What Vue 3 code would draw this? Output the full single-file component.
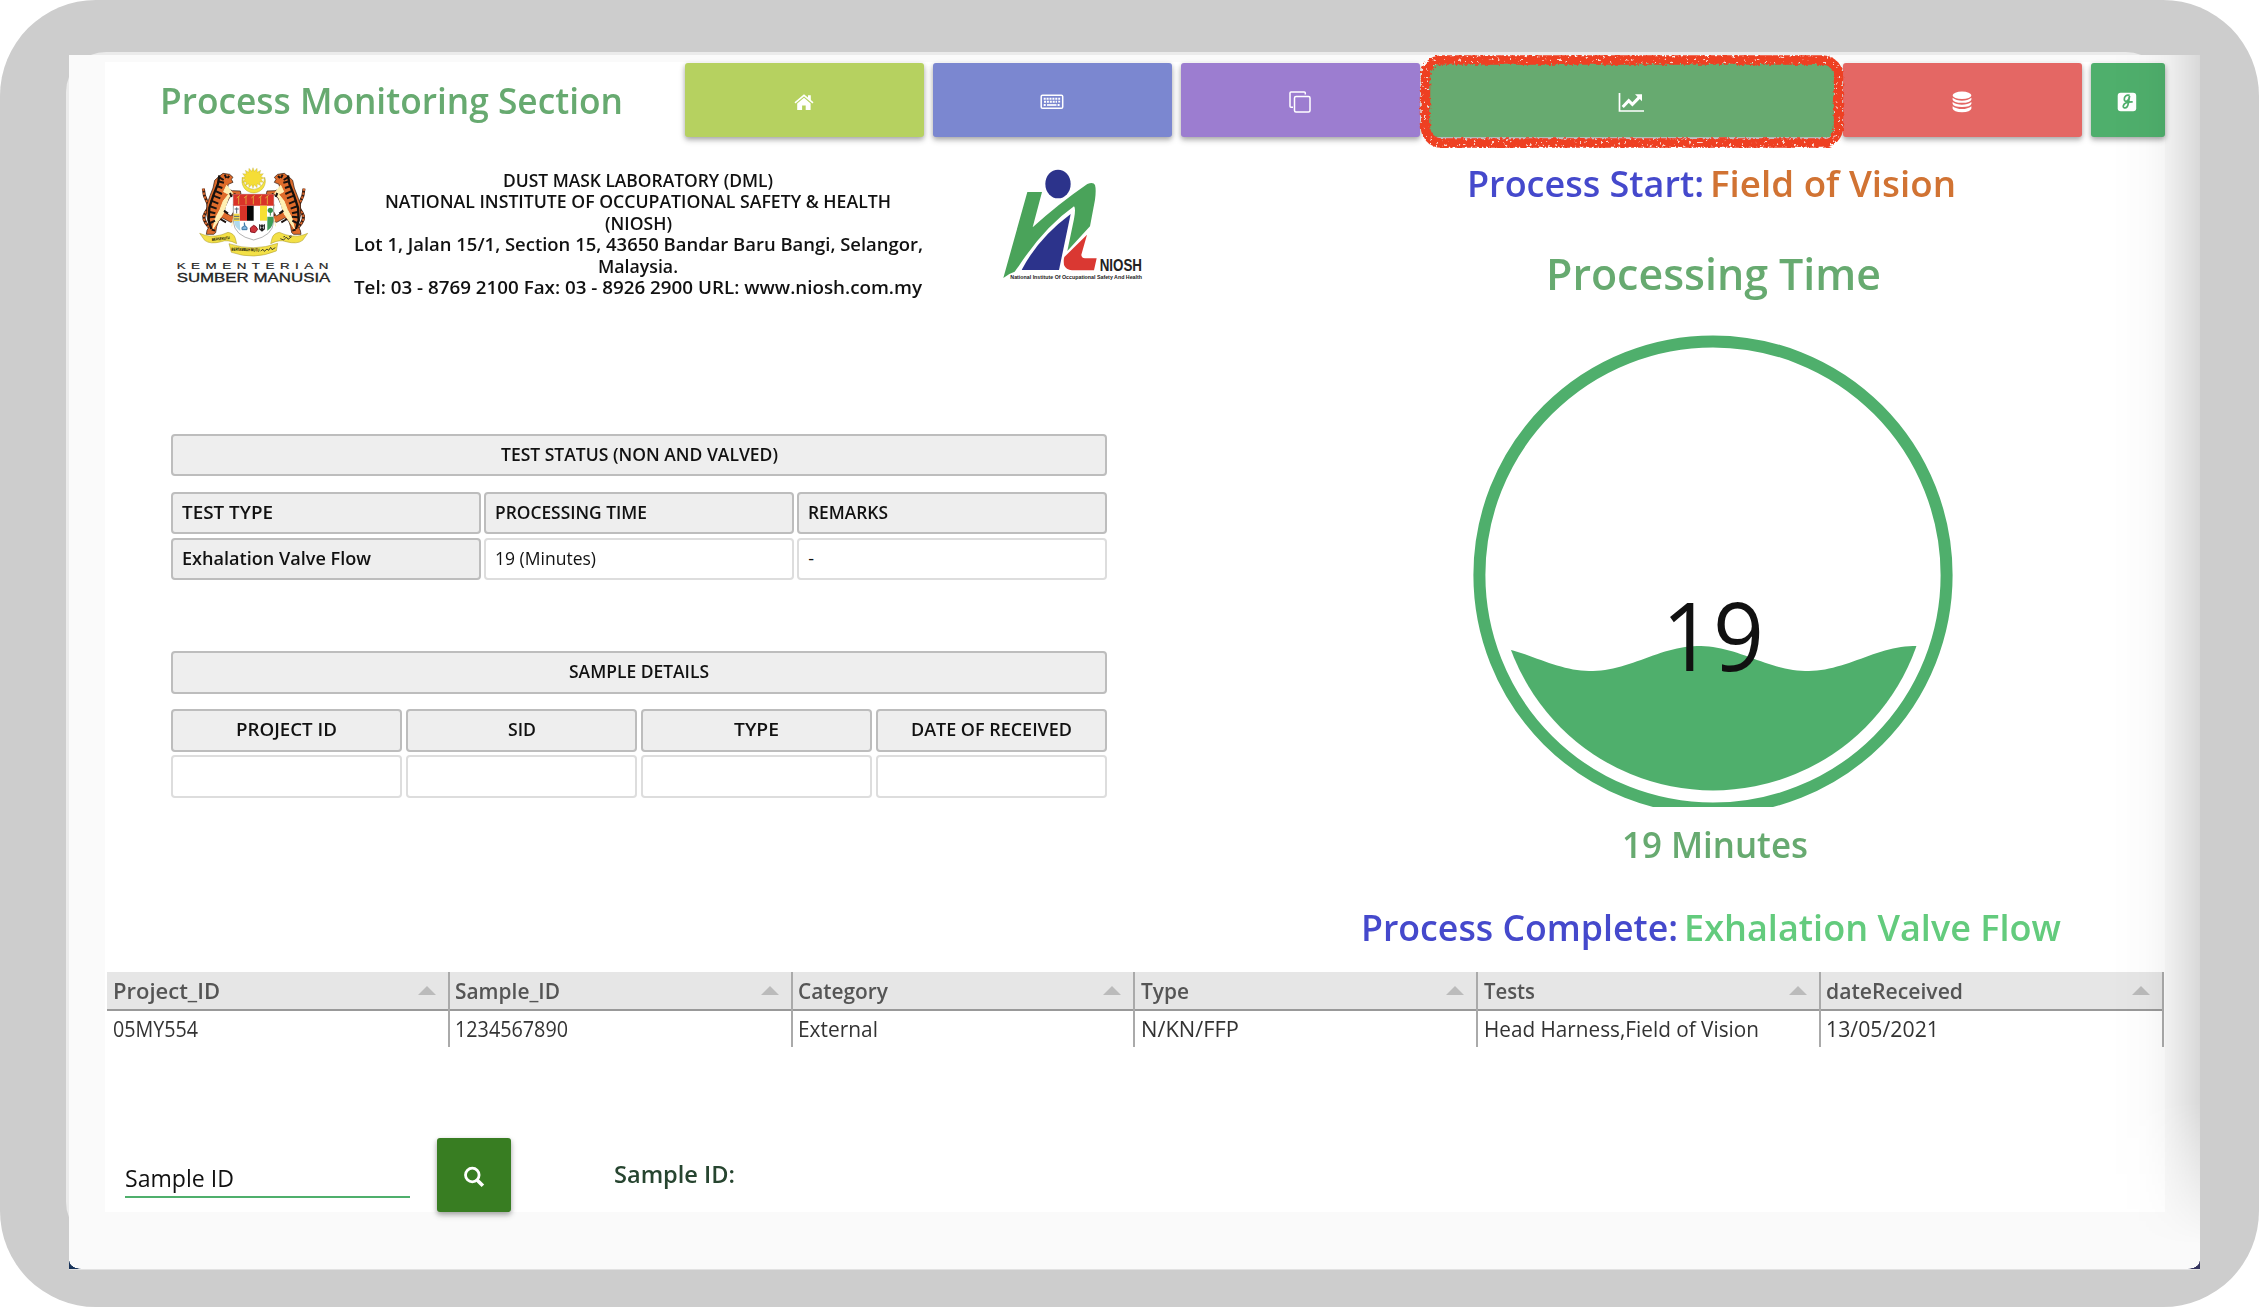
<script setup>
const stage = [
  { text: 'DUST MASK LABORATORY (DML)', w: 270 },
  { text: 'NATIONAL INSTITUTE OF OCCUPATIONAL SAFETY & HEALTH', w: 506 },
  { text: '(NIOSH)', w: 67 },
  { text: 'Lot 1, Jalan 15/1, Section 15, 43650 Bandar Baru Bangi, Selangor,', w: 569 },
  { text: 'Malaysia.', w: 80 },
  { text: 'Tel: 03 - 8769 2100 Fax: 03 - 8926 2900 URL: www.niosh.com.my', w: 568 },
]
const statusHead = [['TEST TYPE', 91], ['PROCESSING TIME', 152], ['REMARKS', 80]]
const sampleHead = [['PROJECT ID', 101], ['SID', 28], ['TYPE', 45], ['DATE OF RECEIVED', 161]]
const columns = [
  { name: 'Project_ID', nw: 107, value: '05MY554', vw: 85 },
  { name: 'Sample_ID', nw: 105, value: '1234567890', vw: 113 },
  { name: 'Category', nw: 90, value: 'External', vw: 80 },
  { name: 'Type', nw: 48, value: 'N/KN/FFP', vw: 98 },
  { name: 'Tests', nw: 51, value: 'Head Harness,Field of Vision', vw: 275 },
  { name: 'dateReceived', nw: 137, value: '13/05/2021', vw: 113 },
]

// Sets a label to a fixed width by condensing or widening its glyphs.
const vFit = {
  mounted(el, { value }) {
    const natural = el.getBoundingClientRect().width
    el.style.transform = `scaleX(${value / natural})`
    el.style.marginRight = `${value - natural}px`
  },
}

// Liquid gauge: sine surface clipped by the inner disc.
const surface = Array.from({ length: 111 }, (_, i) => {
  const x = 30 + i * 4
  const y = 338.5 - 12.5 * Math.cos(((x - 236) / 216.5) * 2 * Math.PI)
  return `${x} ${y.toFixed(2)}`
}).join('L')
const liquid = `M${surface}L470 480L30 480Z`
</script>

<template>
  <div class="device">
    <div class="bezel"></div>
    <div class="screen">
      <main class="panel">
        <header class="topbar">
          <h1><span v-fit="463" class="fit">Process Monitoring Section</span></h1>
          <nav>
            <button class="tile lime">
              <svg width="20" height="17" viewBox="0 0 20 17" fill="#fff"><path d="M10 3.7 3.2 9.5V16h4.9v-4.6h3.6V16h4.9V9.500z"/><path d="M1 8.900 10 1.400l9 7.500" fill="none" stroke="#fff" stroke-width="1.600"/><path d="M14 1.300h2.800v5.300L14 4.300z"/></svg>
            </button>
            <button class="tile blue">
              <svg width="24" height="16" viewBox="0 0 24 16"><rect x="1.200" y="1.200" width="21.500" height="13" rx="1.300" fill="none" stroke="#fff" stroke-width="1.500"/><path d="M3.700 4.700h14M4 7.700h13M3.700 11h2M17.600 11h2.600M19.200 3.800v4.700" stroke="#fff" stroke-width="1.900" stroke-dasharray="2 .9"/><path d="M7 11h9.500" stroke="#fff" stroke-width="1.700"/></svg>
            </button>
            <button class="tile violet">
              <svg width="24" height="24" viewBox="0 0 24 24" fill="none" stroke="#fff" stroke-width="1.500"><rect x="6.500" y="6.500" width="15.500" height="15.500" rx="1.500"/><path d="M17.300 4.500V3q0-1-1-1H3Q2 2 2 3v13.200q0 1 1 1h2"/></svg>
            </button>
            <button class="tile green active">
              <svg width="26" height="21" viewBox="0 0 26 21" fill="none" stroke="#fff"><path d="M1.500 1v18H26" stroke-width="1.700"/><path d="m4.700 15 6-6.300 3.700 3.700 7.300-7.500" stroke-width="3"/><path d="M17 2.300h7v7z" fill="#fff" stroke="none"/></svg>
              <svg class="marker" width="434" height="102" viewBox="0 0 434 102">
                <defs>
                  <filter id="crayon" x="-2%" y="-6%" width="104%" height="112%">
                    <feTurbulence type="fractalNoise" baseFrequency="0.3" numOctaves="2" seed="8" result="n"/>
                    <feDisplacementMap in="SourceGraphic" in2="n" scale="5" result="d"/>
                    <feTurbulence type="fractalNoise" baseFrequency="0.34" numOctaves="2" seed="3"/>
                    <feColorMatrix values="0 0 0 0 0  0 0 0 0 0  0 0 0 0 0  14 0 0 0 -9.300" result="holes"/>
                    <feComposite in="d" in2="holes" operator="out"/>
                  </filter>
                </defs>
                <rect x="10" y="10" width="413" height="83" rx="16" fill="none" stroke="#f8d8d2" stroke-width="6.500"/>
                <rect x="10.500" y="10" width="413" height="83" rx="16" fill="none" stroke="#ee3f24" stroke-width="9.500" filter="url(#crayon)"/>
              </svg>
            </button>
            <button class="tile red">
              <svg width="20" height="22" viewBox="0 0 20 22" fill="#fff"><ellipse cx="10" cy="4.300" rx="9.400" ry="3.700"/><path d="M.6 6.800q3.700 3 9.400 3t9.400-3v1.600q-1 3.400-9.400 3.400T.6 8.400zM.6 11q3.700 2.800 9.400 2.800T19.400 11v1.700q-1 3.300-9.400 3.300T.6 12.700zM.6 15.300q3.700 2.800 9.400 2.800t9.400-2.800v2.300q-1 3.700-9.400 3.700T.6 17.600z"/></svg>
            </button>
            <button class="tile emerald">
              <svg width="20" height="20" viewBox="0 0 20 20"><rect x=".7" y=".7" width="18.500" height="18.500" rx="3" fill="#fff"/><path d="M12.600 3.400c-3-1.200-5.500 1.200-5.300 4 .2 2.700 3.500 2.400 4.500-.6l.8-3-1.200 7.300c-.6 3.300-2.200 5.100-3.900 4.800-2.200-.5-1.300-3.700 1.200-4.900 2.200-1 4.100-1 7-1.100" fill="none" stroke="#4faf6c" stroke-width="1.700"/></svg>
            </button>
          </nav>
        </header>

        <section class="body">
          <div class="left">
            <div class="letterhead">
              <svg class="crest" width="190" height="145" viewBox="0 0 570 435">
                <g id="tiger">
                  <path d="M148 232q-25-25-12-44 15-18 4-35-9-16-10-37" fill="none" stroke="#3a1d10" stroke-width="9"/>
                  <path d="M148 232q-25-25-12-44 15-18 4-35-9-16-10-37" fill="none" stroke="#d9682f" stroke-width="6" stroke-dasharray="7 5"/>
                  <path d="m176 80 13-10 20 3 10 9-5 6 5 9-14 6-3 14 15 5 24 1 2 9-9 5-21-2-8 15-9 20-3 16 20 12 11-17-4-17 9-8 12 9-2 24-11 23-16 5-24-13-12 9-6 17-3 18-6 5h-22l2-12 7-12-8-35 1-32 9-25 9-23 5-23z" fill="#de6b2b" stroke="#24150f" stroke-width="2"/>
                  <path d="m200 106-9 19 15 8-16 20-10 26-14 26-7 31 15-22 15-22 16-48 13-14zM220 205l-5 24" fill="#fff0b4" stroke="#fff0b4" stroke-width="3"/>
                  <path d="m178 82 13 8M174 94l18 4M170 108l17 6M164 122l22 10M158 136l23 9M152 151l23 10M148 168l22 8M146 185l20 5M148 202l18-2M151 219l14-7M181 207l17 10M192 182l12 9M223 178l13 6M218 194l13 6M210 129l5 12M223 130l4 9M194 74l5 10M208 78l-6 6M155 239l10 3" stroke="#1b120f" stroke-width="6"/>
                  <path d="m178 76-4 25-14 35-12 37-2 37 8 27" fill="none" stroke="#17100d" stroke-width="7"/>
                </g>
                <use href="#tiger" transform="matrix(-1 0 0 1 562 0)"/>
                <path d="M248 82a35 35 0 1 0 66 0 31 34 0 1 1-66 0" fill="#f5e43f" stroke="#b8a62b" stroke-width="1.500"/>
                <path d="m279 53 4 11 8-9 1 12 10-6-3 11 11-1-7 9 10 4-10 4 7 9-11-1 3 11-10-6-1 12-8-9-4 11-4-11-8 9-1-12-10 6 3-11-11 1 7-9-10-4 10-4-7-9 11 1-3-11 10 6 1-12 8 9z" fill="#f5dd36" stroke="#baa63e" stroke-width="1"/>
                <path d="M220 133h121v82q-2 42-60 55-58-13-61-55z" fill="#fff" stroke="#8c8c8c" stroke-width="2"/>
                <path d="M220 133h121v34H220z" fill="#d93328"/>
                <path d="M236 138v25M258 138v25M280 138v25M302 138v25M322 138v25m-92-19 10-8m12 8 10-8m12 8 10-8m12 8 10-8m10 8 10-8" stroke="#e1a139" stroke-width="3"/>
                <path d="M239 167h22v45h-22z" fill="#d93328"/><path d="M261 167h20v45h-20z" fill="#070707"/><path d="M300 167h21v45h-21z" fill="#f7df32"/>
                <path d="M221 191h18v22h-18z" fill="#f4da4a"/><path d="M222 213h17l2 30q-18-12-19-30" fill="#afd9ec"/><path d="M322 200h18q3 30-18 42z" fill="#3d9d57"/>
                <path d="M230 172v18m-6-13h12M222 199h16M222 207h16" stroke="#567" stroke-width="3"/>
                <circle cx="331" cy="181" r="8" fill="#369148"/><path d="M331 183v14" stroke="#369148" stroke-width="3"/>
                <path d="M253 218v11l-7 3v7h15v-7l-6-4z" fill="#82b5df" stroke="#3d79a5" stroke-width="3"/>
                <path d="m281 226 7 4 5 8-8 10-13-2-1-12z" fill="#ce333b" stroke="#8c1a25" stroke-width="3"/>
                <path d="M299 223v14l7 6 7-6v-14m-7 0v20m-4-17 8 14m0-14-8 14" fill="none" stroke="#222" stroke-width="3.500"/>
                <path d="m119 250 14 5q32 10 71-8 18 3 22 18l4 16q-27-14-46-6-34 9-50-4z" fill="#f3e047" stroke="#a49527" stroke-width="1.500"/>
                <path d="m443 250-14 5q-32 10-71-8-18 3-22 18l-4 16q27-14 46-6 34 9 50-4z" fill="#f3e047" stroke="#a49527" stroke-width="1.500"/>
                <path d="M207 281q74 25 146-1l-4 23q-67 28-135 4z" fill="#f3e047" stroke="#a49527" stroke-width="1.500"/>
                <text x="156" y="273" font-size="12" font-weight="700" textLength="54" lengthAdjust="spacingAndGlyphs" transform="rotate(-6 156 273)">BERSEKUTU</text>
                <text x="214" y="302" font-size="13" font-weight="700" textLength="84" lengthAdjust="spacingAndGlyphs" transform="rotate(2 214 302)">BERTAMBAH MUTU</text>
                <path d="m302 303 7-5 4 6 8-7 5 4 6-9 4 7 10-6M361 266l10 4 8-9 5 7 11-8m-25 1 5-2m12 1 7-3" fill="none" stroke="#222" stroke-width="2.500"/>
                <text x="50" y="357" font-size="29" letter-spacing="12" fill="#222" stroke="#222" stroke-width=".6" textLength="472" lengthAdjust="spacingAndGlyphs">KEMENTERIAN</text>
                <text x="50" y="396" font-size="37" fill="#222" stroke="#222" stroke-width=".9" textLength="461" lengthAdjust="spacingAndGlyphs">SUMBER MANUSIA</text>
              </svg>
              <address>
                <div v-for="line in stage" :key="line.text"><span v-fit="line.w" class="fit">{{ line.text }}</span></div>
              </address>
              <svg class="niosh" width="170" height="140" viewBox="0 0 510 420">
                <ellipse cx="204" cy="87" rx="38" ry="43" fill="#2c338b"/>
                <path d="M112 111h44l-28 106q78-71 164-130 18-8 23 3 4 14 0 44l-15 80-68 74 20-96q6-32 0-38-88 62-165 178l-13 18q-17 5-34 19z" fill="#4aa35a"/>
                <path d="M242 177 207 345H95q49-95 147-168" fill="#2c338b"/>
                <path d="m291 239-17 60q0 9 11 11h35l-8 36h-66q-18-1-24-16-2-17 1-24z" fill="#da3832"/>
                <text x="329" y="347" font-size="47" font-weight="700" fill="#222" textLength="127" lengthAdjust="spacingAndGlyphs">NIOSH</text>
                <text x="61" y="372" font-size="18" font-weight="700" fill="#222" textLength="395" lengthAdjust="spacingAndGlyphs">National Institute Of Occupational Safety And Health</text>
              </svg>
            </div>

            <div class="forms">
              <div class="box head mid title"><span v-fit="277" class="fit">TEST STATUS (NON AND VALVED)</span></div>
              <div class="grid three">
                <div v-for="[t, w] in statusHead" :key="t" class="box head"><span v-fit="w" class="fit">{{ t }}</span></div>
                <div class="box head"><span v-fit="189" class="fit">Exhalation Valve Flow</span></div>
                <div class="box cell"><span v-fit="101" class="fit">19 (Minutes)</span></div>
                <div class="box cell"><span class="fit">-</span></div>
              </div>
              <div class="box head mid title second"><span v-fit="140" class="fit">SAMPLE DETAILS</span></div>
              <div class="grid four">
                <div v-for="[t, w] in sampleHead" :key="t" class="box head mid"><span v-fit="w" class="fit">{{ t }}</span></div>
                <div v-for="n in 4" :key="n" class="box cell"></div>
              </div>
            </div>
          </div>

          <div class="right">
            <h2 class="start"><span v-fit="237" class="fit indigo">Process Start:</span><span v-fit="246" class="fit orange">Field of Vision</span></h2>
            <h2 class="time"><span v-fit="335" class="fit">Processing Time</span></h2>
            <svg class="gauge" width="500" height="487" viewBox="0 0 500 487">
              <defs><clipPath id="disc"><circle cx="250" cy="255" r="215.500"/></clipPath></defs>
              <circle cx="250" cy="255" r="233.600" fill="none" stroke="#4faf6c" stroke-width="12"/>
              <path :d="liquid" fill="#4faf6c" clip-path="url(#disc)"/>
              <text x="199" y="351" font-size="96" font-weight="500" fill="#111" textLength="102" lengthAdjust="spacingAndGlyphs">19</text>
            </svg>
            <h2 class="minutes"><span v-fit="186" class="fit">19 Minutes</span></h2>
            <h2 class="complete"><span v-fit="317" class="fit indigo">Process Complete:</span><span v-fit="377" class="fit mint">Exhalation Valve Flow</span></h2>
          </div>
        </section>

        <section class="records">
          <div v-for="c in columns" :key="c.name" class="col">
            <div class="th"><span v-fit="c.nw" class="fit">{{ c.name }}</span><i class="sort"></i></div>
            <div class="td"><span v-fit="c.vw" class="fit">{{ c.value }}</span></div>
          </div>
        </section>

        <footer>
          <div class="field"><span v-fit="109" class="fit">Sample ID</span></div>
          <button class="search">
            <svg width="22" height="22" viewBox="0 0 22 22" fill="none" stroke="#fff" stroke-width="2.800"><circle cx="9.300" cy="9" r="6.800"/><path d="m14.300 14.200 5.600 5.600" stroke-width="3.600"/></svg>
          </button>
          <div class="result"><span v-fit="121" class="fit">Sample ID:</span></div>
        </footer>
      </main>
      <div class="shade"></div>
    </div>
  </div>
</template>

<style>
body { margin: 0; background: #fff; }
</style>

<style scoped>
* { box-sizing: border-box; }
.device {
  position: relative;
  width: 2259px;
  height: 1307px;
  padding: 55px 59px 37px 69px;
  border-radius: 96px;
  background: #cdcdcd;
  overflow: hidden;
  font-family: "Open Sans", "Noto Sans", sans-serif;
  color: #111;
}
.bezel {
  position: absolute;
  left: 66px;
  top: 52px;
  width: 2100px;
  height: 1190px;
  border-radius: 40px;
  background: #ebebeb;
}
.screen {
  position: relative;
  width: 2131px;
  height: 1215px;
  padding: 7px 0 0 36px;
  background: #fafafa;
  border-bottom: 1px solid #e2e2e2;
}
.screen::before,
.screen::after {
  content: "";
  position: absolute;
  bottom: 0;
  width: 12px;
  height: 8px;
}
.screen::before { left: 0; background: radial-gradient(ellipse at 100% 0, transparent 66%, #19345a 70%); }
.screen::after { right: 0; background: radial-gradient(ellipse at 0 0, transparent 66%, #34345f 70%); }
.shade {
  position: absolute;
  right: 0;
  top: 0;
  width: 90px;
  height: 1190px;
  background: linear-gradient(90deg, transparent, rgba(0, 0, 0, .01) 38%, rgba(0, 0, 0, .045) 65%, rgba(0, 0, 0, .13));
  mask-image: linear-gradient(#000 88%, transparent);
  pointer-events: none;
}
.panel { width: 2060px; height: 1150px; background: #fff; }
.fit { display: inline-block; white-space: nowrap; transform-origin: 0 50%; }
.topbar {
  display: flex;
  justify-content: space-between;
  height: 75px;
  padding: 1px 0 0 54px;
}
h1, h2 { margin: 0; font-size: 36px; font-weight: 650; line-height: 50px; color: #67aa70; }
h1 { line-height: 76px; padding-left: 1px; }
nav { display: flex; gap: 9.4px; margin-right: .5px; }
button {
  display: flex;
  align-items: center;
  justify-content: center;
  padding: 0;
  border: 0;
  border-radius: 3px;
  height: 74px;
  box-shadow: 0 3px 6px rgba(0, 0, 0, .24), 0 2px 4px rgba(0, 0, 0, .16);
}
.tile { width: 238.600px; padding-top: 4px; }
.lime { background: #b6d160; }
.blue { background: #7b87d0; }
.violet { background: #9c7dd0; }
.green { background: #67aa70; }
.red { background: #e46764; }
.emerald { background: #4faf6c; width: 73.500px; padding-right: 1px; }
.active { position: relative; width: 404.500px; padding-right: 1px; }
.marker { position: absolute; left: -14px; top: -13px; z-index: 1; }

.body { display: flex; height: 835px; }
.left { width: 1157px; }
.letterhead { display: flex; align-items: flex-start; height: 297px; padding-left: 55px; }
.crest { margin-top: 13px; font-family: "Liberation Sans", sans-serif; }
.niosh { margin: 18px 0 0 67px; font-family: "Liberation Sans", sans-serif; }
address {
  width: 570px;
  margin: 33px 0 0 3px;
  font-size: 18px;
  font-style: normal;
  font-weight: 650;
  line-height: 21.440px;
  text-align: center;
}
.forms { width: 936px; margin-left: 66px; margin-top: -.5px; font-size: 18px; }
.box {
  display: flex;
  align-items: center;
  height: 42.500px;
  padding: 0 0 1px 9px;
  border: 2px solid #ddd;
  border-radius: 4px;
  line-height: 37px;
}
.head { background: #eee; border-color: #bdbdbd; font-weight: 650; }
.mid { justify-content: center; padding: 0 0 1px; }
.title { margin-bottom: 15.500px; }
.second { margin-top: 71px; }
.grid { display: grid; gap: 3.500px; }
.three { grid-template-columns: repeat(3, 1fr); }
.four { grid-template-columns: repeat(4, 1fr); }

.right { width: 903px; display: flex; flex-direction: column; align-items: center; }
.start { margin: 22px 5px 0 0; display: flex; gap: 6px; }
.time { margin-top: 34px; font-size: 44px; line-height: 60px; }
.gauge { display: block; margin: 17px 1px 0 0; flex: none; }
.minutes { margin: 13px 0 0 2px; }
.complete { margin: 33px 6px 0 0; display: flex; gap: 6px; }
.indigo { color: #4549cc; }
.orange { color: #d17333; }
.mint { color: #63cb7d; }

.records { display: flex; margin-left: 2px; height: 75px; font-size: 21px; color: #333; }
.col { width: 342.800px; border-right: 2px solid #aaa; }
.th {
  display: flex;
  align-items: center;
  justify-content: space-between;
  height: 39px;
  padding: 0 12px 0 5.500px;
  background: #e6e6e6;
  border-bottom: 2px solid #999;
  font-weight: 650;
  color: #555;
}
.sort { border: 9px solid transparent; border-top: 0; border-bottom: 9px solid #bbb; }
.td { height: 36px; padding-left: 5.500px; line-height: 37px; }

footer { display: flex; align-items: flex-start; height: 165px; padding: 91px 0 0 20px; font-size: 24px; }
.field { width: 285px; height: 60px; line-height: 79px; border-bottom: 2px solid #4faf6c; overflow: visible; }
.search { width: 74px; margin-left: 27px; background: #387d22; padding: 4px 1px 0 0; }
.result { margin-left: 103px; line-height: 72px; font-weight: 650; color: #274530; }
</style>
